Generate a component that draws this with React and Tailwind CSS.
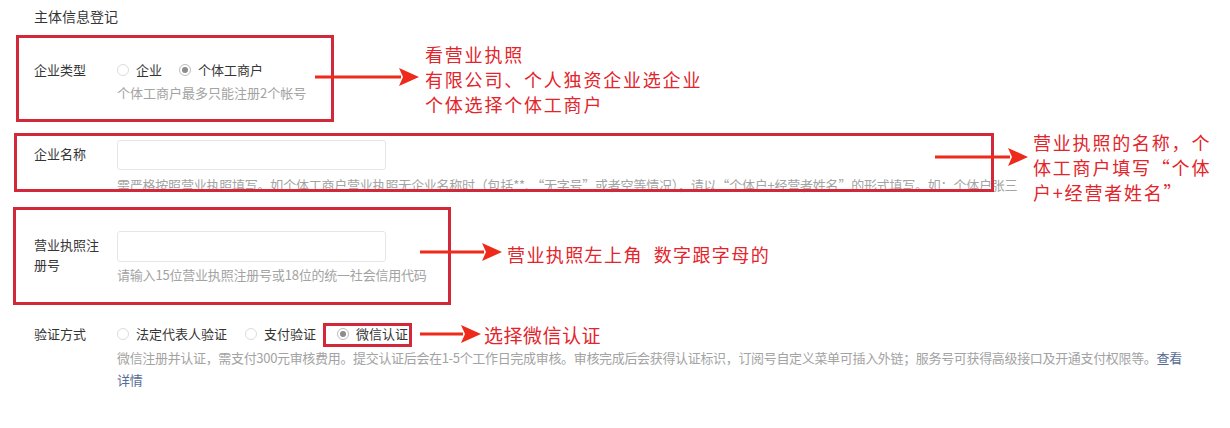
import React from "react";

const FONT = { fontFamily: '"Microsoft YaHei", "Noto Sans CJK SC", "Noto Sans", sans-serif' };

function Arrow({ x1, x2, y }) {
  const w = x2 - x1;
  const head = 20;
  return (
    <svg
      className="absolute"
      style={{ left: x1, top: y - 10 }}
      width={w}
      height={20}
      viewBox={`0 0 ${w} 20`}
    >
      <path d={`M0 8.6 L${w - head + 2} 8.4 L${w - head + 2} 11.6 L0 11.4 Z`} fill="#ee2a1b" />
      <path d={`M${w - head} 1 L${w} 10 L${w - head} 19 L${w - head + 4} 10 Z`} fill="#ee2a1b" />
    </svg>
  );
}

function Radio({ checked }) {
  return (
    <span
      className={
        "inline-flex w-[12px] h-[12px] rounded-full border items-center justify-center shrink-0 " +
        (checked ? "border-[#bdbdbd]" : "border-[#dcdcdc]")
      }
    >
      {checked && <span className="w-[6px] h-[6px] rounded-full bg-[#8c8c8c]" />}
    </span>
  );
}

function Option({ checked, label, className = "" }) {
  return (
    <span className={"inline-flex items-center gap-[7px] " + className}>
      <Radio checked={checked} />
      <span>{label}</span>
    </span>
  );
}

export default function App() {
  return (
    <div className="relative w-[1230px] h-[428px] bg-white overflow-hidden text-[13px] text-[#353535]" style={FONT}>
      <div className="pl-[34px]">
        <div className="mt-[6px] text-[14px] leading-[20px]">主体信息登记</div>

        {/* Row 1 */}
        <div className="flex mt-[34px]">
          <div className="w-[83px] leading-[20px]">企业类型</div>
          <div>
            <div className="flex items-center leading-[20px]">
              <Option label="企业" className="mr-[17px]" />
              <Option checked label="个体工商户" />
            </div>
            <div className="mt-[3px] leading-[20px] text-[#a3a3a3]">个体工商户最多只能注册2个帐号</div>
          </div>
        </div>

        {/* Row 2 */}
        <div className="flex mt-[37px]">
          <div className="w-[83px] leading-[20px] pt-[4px]">企业名称</div>
          <div>
            <div className="w-[269px] h-[30px] border border-[#e6e6e6] rounded-[3px]" />
            <div className="mt-[5px] leading-[20px] text-[#a3a3a3] whitespace-nowrap tracking-[-0.22px]">
              需严格按照营业执照填写。如个体工商户营业执照无企业名称时（包括**、“无字号”或者空等情况），请以“个体户+经营者姓名”的形式填写。如：个体户张三
            </div>
          </div>
        </div>

        {/* Row 3 */}
        <div className="flex mt-[36px]">
          <div className="w-[83px] leading-[20px] pt-[4px]">
            营业执照注
            <br />
            册号
          </div>
          <div>
            <div className="w-[269px] h-[31px] border border-[#e6e6e6] rounded-[3px]" />
            <div className="mt-[3px] leading-[20px] text-[#a3a3a3] tracking-[-0.2px]">请输入15位营业执照注册号或18位的统一社会信用代码</div>
          </div>
        </div>

        {/* Row 4 */}
        <div className="flex mt-[39px]">
          <div className="w-[83px] leading-[20px]">验证方式</div>
          <div>
            <div className="flex items-center leading-[20px]">
              <Option label="法定代表人验证" className="mr-[18px]" />
              <Option label="支付验证" className="mr-[21px]" />
              <Option checked label="微信认证" />
            </div>
            <div className="mt-[3px] leading-[22px] text-[#a3a3a3] whitespace-nowrap tracking-[-0.33px]">
              微信注册并认证，需支付300元审核费用。提交认证后会在1-5个工作日完成审核。审核完成后会获得认证标识，订阅号自定义菜单可插入外链；服务号可获得高级接口及开通支付权限等。
              <span className="text-[#576b95]">查看</span>
              <br />
              <span className="text-[#576b95]">详情</span>
            </div>
          </div>
        </div>
      </div>

      {/* Annotation boxes */}
      <div className="absolute left-[16px] top-[35px] w-[318px] h-[87px] border-[3px] border-[#d1283a]" />
      <div className="absolute left-[14px] top-[133px] w-[980px] h-[59px] border-[3px] border-[#d1283a]" />
      <div className="absolute left-[13px] top-[207px] w-[438px] h-[98px] border-[3px] border-[#d1283a]" />
      <div className="absolute left-[323px] top-[323px] w-[89px] h-[24px] border-[3px] border-[#d1283a]" />

      {/* Arrows */}
      <Arrow x1={315} x2={419} y={77} />
      <Arrow x1={935} x2={1028} y={157} />
      <Arrow x1={420} x2={502} y={252} />
      <Arrow x1={420} x2={481} y={334} />

      {/* Annotation text */}
      <div className="absolute left-[425px] top-[42px] text-[18px] leading-[25px] tracking-[1.8px] text-[#e3242b]">
        看营业执照
        <br />
        有限公司、个人独资企业选企业
        <br />
        个体选择个体工商户
      </div>
      <div className="absolute left-[1033px] top-[130px] text-[18px] leading-[25px] tracking-[1.8px] text-[#e3242b] whitespace-nowrap">
        营业执照的名称，个
        <br />
        体工商户填写“个体
        <br />
        户+经营者姓名”
      </div>
      <div className="absolute left-[507px] top-[242px] text-[18px] leading-[25px] tracking-[1.4px] text-[#e3242b] whitespace-pre">
        营业执照左上角  数字跟字母的
      </div>
      <div className="absolute left-[484px] top-[322px] text-[19px] leading-[25px] tracking-[0.5px] text-[#e3242b]">
        选择微信认证
      </div>
    </div>
  );
}
